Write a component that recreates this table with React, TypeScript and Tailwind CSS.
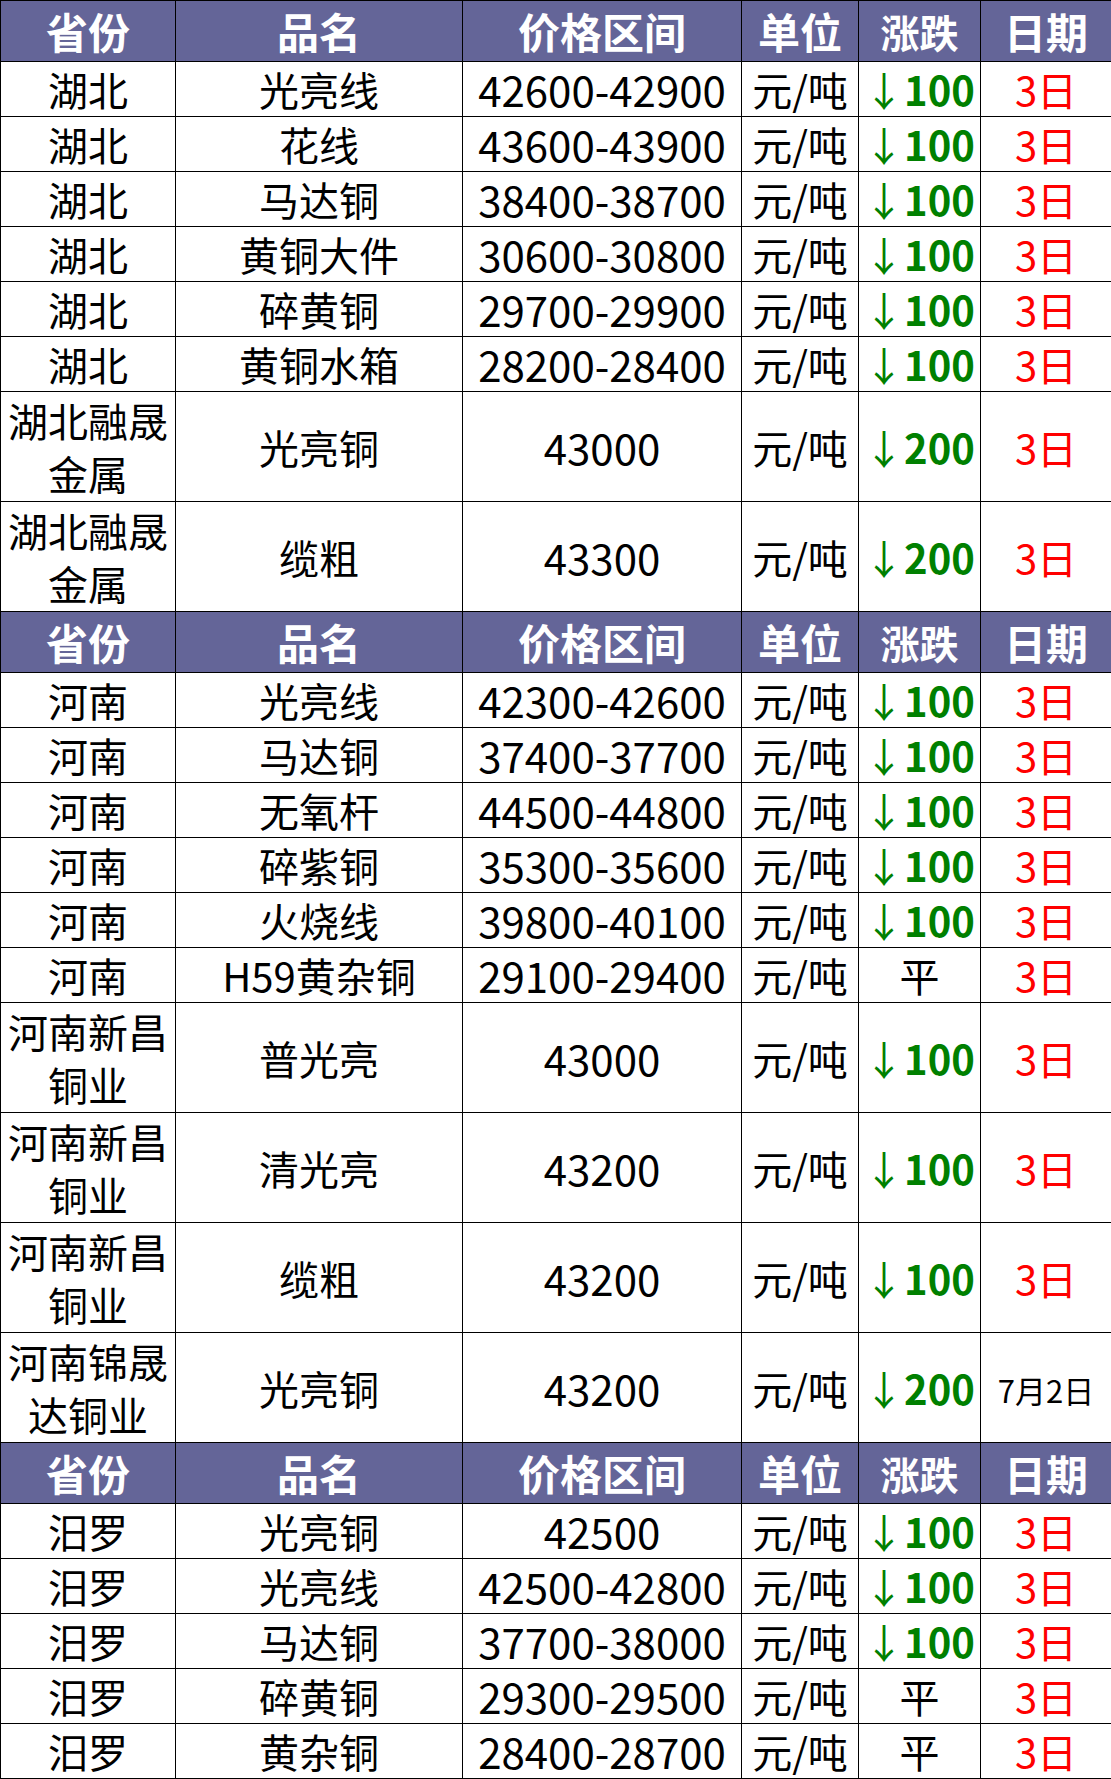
import React from "react";

type Row = {
  province: string;
  name: string;
  price: string;
  change: string;
  date: string;
  tall?: boolean;
};

const SECTIONS: Row[][] = [
  [
    { province: "湖北", name: "光亮线", price: "42600-42900", change: "100", date: "3日" },
    { province: "湖北", name: "花线", price: "43600-43900", change: "100", date: "3日" },
    { province: "湖北", name: "马达铜", price: "38400-38700", change: "100", date: "3日" },
    { province: "湖北", name: "黄铜大件", price: "30600-30800", change: "100", date: "3日" },
    { province: "湖北", name: "碎黄铜", price: "29700-29900", change: "100", date: "3日" },
    { province: "湖北", name: "黄铜水箱", price: "28200-28400", change: "100", date: "3日" },
    { province: "湖北融晟金属", name: "光亮铜", price: "43000", change: "200", date: "3日", tall: true },
    { province: "湖北融晟金属", name: "缆粗", price: "43300", change: "200", date: "3日", tall: true },
  ],
  [
    { province: "河南", name: "光亮线", price: "42300-42600", change: "100", date: "3日" },
    { province: "河南", name: "马达铜", price: "37400-37700", change: "100", date: "3日" },
    { province: "河南", name: "无氧杆", price: "44500-44800", change: "100", date: "3日" },
    { province: "河南", name: "碎紫铜", price: "35300-35600", change: "100", date: "3日" },
    { province: "河南", name: "火烧线", price: "39800-40100", change: "100", date: "3日" },
    { province: "河南", name: "H59黄杂铜", price: "29100-29400", change: "平", date: "3日" },
    { province: "河南新昌铜业", name: "普光亮", price: "43000", change: "100", date: "3日", tall: true },
    { province: "河南新昌铜业", name: "清光亮", price: "43200", change: "100", date: "3日", tall: true },
    { province: "河南新昌铜业", name: "缆粗", price: "43200", change: "100", date: "3日", tall: true },
    { province: "河南锦晟达铜业", name: "光亮铜", price: "43200", change: "200", date: "7月2日", tall: true },
  ],
  [
    { province: "汨罗", name: "光亮铜", price: "42500", change: "100", date: "3日" },
    { province: "汨罗", name: "光亮线", price: "42500-42800", change: "100", date: "3日" },
    { province: "汨罗", name: "马达铜", price: "37700-38000", change: "100", date: "3日" },
    { province: "汨罗", name: "碎黄铜", price: "29300-29500", change: "平", date: "3日" },
    { province: "汨罗", name: "黄杂铜", price: "28400-28700", change: "平", date: "3日" },
  ],
];

const HEADERS = ["省份", "品名", "价格区间", "单位", "涨跌", "日期"];

const cell = "border border-black text-center align-middle p-0 leading-[48px]";

const HeaderRow = () => (
  <tr className="h-[61px] bg-[#646598]">
    {HEADERS.map((h) => (
      <th
        key={h}
        className={`${cell} whitespace-nowrap font-bold text-white ${h === "涨跌" ? "text-[39px]" : "text-[42px]"}`}
      >
        {h}
      </th>
    ))}
  </tr>
);

const DataRow = ({ row }: { row: Row }) => (
  <tr className={row.tall ? "h-[110px]" : "h-[55px]"}>
    <td className={`${cell} ${row.tall ? "whitespace-normal px-1 leading-[53px]" : "whitespace-nowrap"}`}>
      {row.province}
    </td>
    <td className={`${cell} whitespace-nowrap`}>{row.name}</td>
    <td className={`${cell} whitespace-nowrap text-[42px]`}>{row.price}</td>
    <td className={`${cell} whitespace-nowrap`}>元/吨</td>
    <td className={`${cell} whitespace-nowrap`}>
      {row.change === "平" ? (
        <span className="text-black">平</span>
      ) : (
        <span className="text-[#008000]">
          <span className="font-normal">↓</span>
          <span className="font-bold">{row.change}</span>
        </span>
      )}
    </td>
    <td className={`${cell} whitespace-nowrap`}>
      {row.date === "3日" ? (
        <span className="text-[#ff0000]">3日</span>
      ) : (
        <span className="text-[31px] text-black">{row.date}</span>
      )}
    </td>
  </tr>
);

export default function App() {
  return (
    <div className="w-[1111px] bg-white font-['Noto_Sans_CJK_SC','Noto_Sans',sans-serif] text-[40px] text-black">
      <table className="w-[1111px] table-fixed border-collapse">
        <colgroup>
          <col className="w-[175px]" />
          <col className="w-[287px]" />
          <col className="w-[279px]" />
          <col className="w-[117px]" />
          <col className="w-[122px]" />
          <col className="w-[131px]" />
        </colgroup>
        <tbody>
          {SECTIONS.map((rows, i) => (
            <React.Fragment key={`section-${i}`}>
              <HeaderRow />
              {rows.map((row, j) => (
                <DataRow key={`row-${i}-${j}`} row={row} />
              ))}
            </React.Fragment>
          ))}
        </tbody>
      </table>
    </div>
  );
}
